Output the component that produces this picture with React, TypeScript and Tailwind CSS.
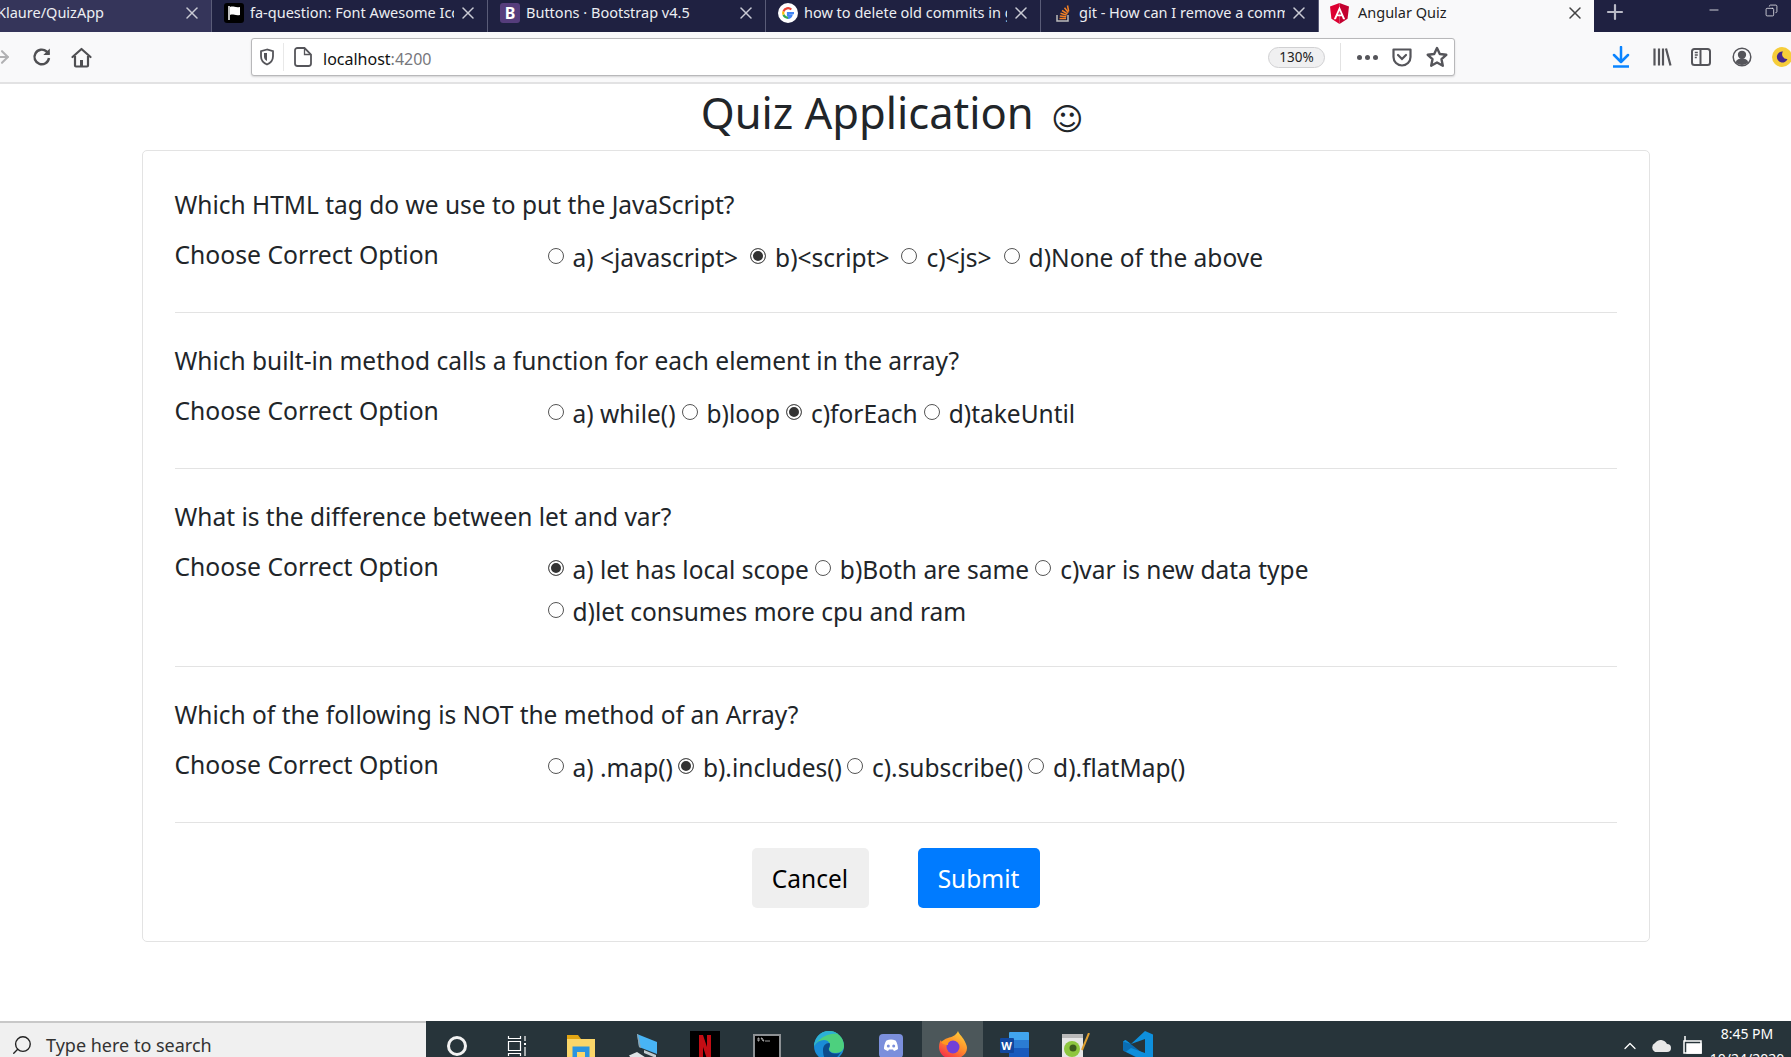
import { ArrowRight, ChevronUp, Copy, Minus, Plus, Search, X } from 'lucide-react'

const tabs = [
  { title: 'Klaure/QuizApp', width: 'w-[212px]', bg: 'bg-[#35355a]', icon: null },
  { title: 'fa-question: Font Awesome Icons', width: 'w-[276px]', bg: 'bg-[#1f2141]', icon: 'flag' },
  { title: 'Buttons · Bootstrap v4.5', width: 'w-[278px]', bg: 'bg-[#1f2141]', icon: 'bootstrap' },
  { title: 'how to delete old commits in git', width: 'w-[275px]', bg: 'bg-[#1f2141]', icon: 'google' },
  { title: 'git - How can I remove a commit', width: 'w-[278px]', bg: 'bg-[#1f2141]', icon: 'stack' },
]

const questions = [
  {
    text: 'Which HTML tag do we use to put the JavaScript?',
    options: ['a) <javascript>', 'b)<script>', 'c)<js>', 'd)None of the above'],
    picked: 1,
    gap: 'gap-x-[12px]',
  },
  {
    text: 'Which built-in method calls a function for each element in the array?',
    options: ['a) while()', 'b)loop', 'c)forEach', 'd)takeUntil'],
    picked: 2,
    gap: 'gap-x-[6px]',
  },
  {
    text: 'What is the difference between let and var?',
    options: ['a) let has local scope', 'b)Both are same', 'c)var is new data type', 'd)let consumes more cpu and ram'],
    picked: 0,
    gap: 'gap-x-[6px]',
  },
  {
    text: 'Which of the following is NOT the method of an Array?',
    options: ['a) .map()', 'b).includes()', 'c).subscribe()', 'd).flatMap()'],
    picked: 1,
    gap: 'gap-x-[5px]',
  },
]

function TabIcon({ kind }: { kind: string | null }) {
  if (kind === 'flag') {
    return (
      <svg viewBox="0 0 20 20" className="w-5 h-5 shrink-0">
        <rect width="20" height="20" rx="3" fill="#000" />
        <path d="M5 3v14" stroke="#fff" strokeWidth="1.5" />
        <path d="M6 4c3-1.500 5 1 10 0v8c-5 1-7-1.500-10 0z" fill="#fff" />
      </svg>
    )
  }
  if (kind === 'bootstrap') {
    return (
      <div className="w-5 h-5 shrink-0 rounded-[3px] bg-[#563d7c] text-white text-[16px] font-bold leading-5 text-center">B</div>
    )
  }
  if (kind === 'google') {
    return (
      <svg viewBox="0 0 20 20" className="w-5 h-5 shrink-0">
        <circle cx="10" cy="10" r="10" fill="#fff" />
        <path d="M16 10.200h-6v2.300h3.400c-.4 1.500-1.700 2.300-3.400 2.300" fill="none" stroke="#4285f4" strokeWidth="2.200" />
        <path d="M10 14.800a4.800 4.800 0 0 1-4.500-3.100" fill="none" stroke="#34a853" strokeWidth="2.200" />
        <path d="M5.500 11.700a4.800 4.800 0 0 1 0-3.400" fill="none" stroke="#fbbc05" strokeWidth="2.200" />
        <path d="M5.500 8.300A4.800 4.800 0 0 1 13.300 6.500" fill="none" stroke="#ea4335" strokeWidth="2.200" />
      </svg>
    )
  }
  if (kind === 'stack') {
    return (
      <svg viewBox="0 0 20 20" className="w-5 h-5 shrink-0" fill="none">
        <path d="M4 12v6h11v-6" stroke="#bcbbbb" strokeWidth="1.500" />
        <path d="M6.500 15.500h6.500M6.800 13l6.400.8M7.500 10.300l6.200 1.800M9 7.500l5.500 3.300M11.500 4.800l3.800 4.800M14.500 2.500l1.200 6" stroke="#f48024" strokeWidth="1.500" />
      </svg>
    )
  }
  return null
}

function Tab({ title, width, bg, icon }: { title: string; width: string; bg: string; icon: string | null }) {
  return (
    <div className={`${width} ${bg} h-8 shrink-0 flex items-center border-r border-[#5a5c78] pb-[6px] ${icon ? 'pl-[12px]' : ''} pr-[9px]`}>
      <TabIcon kind={icon} />
      <span className={`flex-1 min-w-0 overflow-hidden whitespace-nowrap text-[14.500px] text-[#eceef2] ${icon ? 'ml-[6px]' : '-ml-[3px]'}`}>{title}</span>
      <X className="w-[20px] h-[20px] text-[#c9cad4] ml-[4px] shrink-0" strokeWidth={1.800} />
    </div>
  )
}

function TabStrip() {
  return (
    <div className="h-8 bg-[#1f2141] flex items-start shrink-0">
      {tabs.map(t => (
        <Tab key={t.title} title={t.title} width={t.width} bg={t.bg} icon={t.icon} />
      ))}
      <div className="w-[275px] h-8 shrink-0 bg-[#f9f9fa] flex items-center pl-[11px] pr-[9px] pb-[6px]">
        <svg viewBox="0 0 20 22" className="w-[19px] h-[21px] shrink-0">
          <path d="M10 0 0 3.500l1.500 13L10 22z" fill="#dd0031" />
          <path d="M10 0v22l8.500-5.500 1.500-13z" fill="#c3002f" />
          <path d="M10 3.500 4 17h2.300l1.200-3h5l1.200 3H16zM8.400 12 10 8l1.600 4z" fill="#fff" />
        </svg>
        <span className="flex-1 ml-[9px] text-[14.500px] text-[#1e1e24] whitespace-nowrap">Angular Quiz</span>
        <X className="w-[20px] h-[20px] text-[#444] shrink-0" strokeWidth={1.800} />
      </div>
      <Plus className="w-[24px] h-[24px] text-[#b9bac6] ml-[9px] shrink-0" strokeWidth={2.200} />
      <div className="flex-1" />
      <Minus className="w-[14px] h-[14px] text-[#e6e6ea] mt-[3px] mr-[44px]" strokeWidth={1.500} />
      <Copy className="w-[13px] h-[13px] text-[#e6e6ea] mt-[4px] mr-[13px] -scale-x-100" strokeWidth={1.500} />
    </div>
  )
}

function Toolbar() {
  return (
    <div className="h-[52px] shrink-0 bg-[#f9f9fa] border-b-2 border-[#e2e2e3] flex items-center overflow-hidden">
      <ArrowRight className="w-[20px] h-[20px] text-[#b1b1b3] -ml-[8px] shrink-0" strokeWidth={2.500} />
      <svg viewBox="0 0 20 20" className="w-[20px] h-[20px] ml-[20px] shrink-0" fill="none" stroke="#4f4f52" strokeWidth="2.400">
        <path d="M17 11a7.300 7.300 0 1 1-2.400-6.500L17 7" />
        <path d="M17.800 1.500V8h-6.500" fill="#4f4f52" strokeWidth="0" />
      </svg>
      <svg viewBox="0 0 21 21" className="w-[21px] h-[21px] ml-[19px] shrink-0" fill="none" stroke="#4f4f52" strokeWidth="2.200">
        <path d="M1.500 10 10.500 2l9 8" strokeLinecap="round" strokeLinejoin="round" />
        <path d="M4 9v9.500a1 1 0 0 0 1 1h11a1 1 0 0 0 1-1V9" />
        <rect x="9" y="13" width="3" height="6" fill="#4f4f52" strokeWidth="0" />
      </svg>
      <div className="w-[1204px] h-[38px] ml-[159px] shrink-0 bg-white border border-[#b8b8ba] rounded-[3px] shadow-[0_1px_2px_rgba(0,0,0,0.15)] flex items-center pr-[6px]">
        <svg viewBox="0 0 16 18" className="w-[16px] h-[18px] ml-[7px] shrink-0">
          <path d="M8 1.500 2 3.200v5c0 4 2.500 6.700 6 8.300 3.500-1.600 6-4.300 6-8.300v-5z" fill="none" stroke="#55555a" strokeWidth="1.800" />
          <path d="M8 5H5v3.500c0 2 1.200 3.500 3 4.500z" fill="#55555a" />
        </svg>
        <div className="w-px h-[28px] bg-[#e8e8e8] ml-[8px]" />
        <svg viewBox="0 0 18 20" className="w-[18px] h-[20px] ml-[10px] shrink-0" fill="none" stroke="#55555a" strokeWidth="1.800">
          <path d="M3.500 1h7l6.500 6.500v9a2.500 2.500 0 0 1-2.500 2.500h-11A2.500 2.500 0 0 1 1 16.500v-13A2.500 2.500 0 0 1 3.500 1z" />
          <path d="M10.500 1v6.500H17" strokeWidth="1.300" />
        </svg>
        <span className="ml-[11px] mt-[3px] text-[16px] text-[#111]">localhost<span className="text-[#77777c]">:4200</span></span>
        <div className="flex-1" />
        <div className="w-[57px] h-[21px] rounded-full bg-[#f0f0f1] border border-[#d0d0d2] text-[13.500px] text-[#222] flex items-center justify-center">130%</div>
        <div className="w-px h-[28px] bg-[#e2e2e2] ml-[15px]" />
        <div className="flex gap-[3px] ml-[16px] shrink-0">
          <div className="w-[5px] h-[5px] rounded-full bg-[#55555a]" />
          <div className="w-[5px] h-[5px] rounded-full bg-[#55555a]" />
          <div className="w-[5px] h-[5px] rounded-full bg-[#55555a]" />
        </div>
        <svg viewBox="0 0 20 20" className="w-[20px] h-[20px] ml-[14px] shrink-0" fill="none" stroke="#55555a" strokeWidth="2.200">
          <path d="M1.500 2.500h17v7.500a8.500 8.500 0 0 1-17 0z" strokeLinejoin="round" />
          <path d="m6 8 4 4 4-4" strokeLinecap="round" />
        </svg>
        <svg viewBox="0 0 22 22" className="w-[22px] h-[22px] ml-[14px] shrink-0" fill="none" stroke="#55555a" strokeWidth="2.400" strokeLinejoin="round">
          <path d="m11 2 2.800 6 6.500.8-4.800 4.400 1.300 6.500L11 16.500l-5.800 3.200 1.300-6.500-4.800-4.400 6.500-.8z" />
        </svg>
      </div>
      <svg viewBox="0 0 20 22" className="w-[20px] h-[22px] ml-[156px] shrink-0" fill="none" stroke="#0a84ff" strokeWidth="2.500">
        <path d="M10 1v14M3 9l7 7 7-7" strokeLinecap="round" strokeLinejoin="round" />
        <path d="M2 20.500h16" />
      </svg>
      <svg viewBox="0 0 20 20" className="w-[20px] h-[20px] ml-[21px] shrink-0" fill="none" stroke="#55555a" strokeWidth="2.200">
        <path d="M2.500 1.500v17M7 1.500v17M11 1.500v17M14 1.500l4.500 17" />
      </svg>
      <svg viewBox="0 0 20 20" className="w-[20px] h-[20px] ml-[19px] shrink-0" fill="none" stroke="#55555a" strokeWidth="2">
        <rect x="1" y="2" width="18" height="16" rx="2.500" />
        <path d="M9.500 2.500v15" />
        <path d="M3.800 5.500h3M3.800 8h3M3.800 10.500h2" strokeWidth="1.300" />
      </svg>
      <svg viewBox="0 0 20 20" className="w-[20px] h-[20px] ml-[21px] shrink-0" fill="none" stroke="#55555a" strokeWidth="1.500">
        <circle cx="10" cy="10" r="8.800" />
        <circle cx="10" cy="7.800" r="3.400" fill="#55555a" />
        <path d="M3.800 15.500c.5-3 3-4 6.200-4s5.700 1 6.200 4c-3 3.200-9.400 3.200-12.400 0z" fill="#55555a" stroke="none" />
      </svg>
      <div className="w-[20px] h-[20px] ml-[20px] shrink-0 rounded-full bg-[#f6cd3a] flex items-center justify-center">
        <svg viewBox="0 0 12 12" className="w-[12px] h-[12px]">
          <path d="M7 .5A5.500 5.500 0 1 0 11.500 8 4.800 4.800 0 0 1 7 .5z" fill="#45278d" />
        </svg>
      </div>
    </div>
  )
}

function Question({ text, options, picked, index, gap }: { text: string; options: string[]; picked: number; index: number; gap: string }) {
  return (
    <div className={index === 0 ? '' : 'pt-[30px]'}>
      <h5 className="text-[24.500px] leading-[36px] text-[#212529]">{text}</h5>
      <div className="flex mt-[14px]">
        <label className="w-[373px] shrink-0 text-[24.700px] leading-[36px] text-[#212529]">Choose Correct Option</label>
        <div className={`w-[800px] flex flex-wrap ${gap}`}>
          {options.map((opt, i) => (
            <label key={opt} className="flex items-center h-[42px] gap-[9px] text-[24.500px] text-[#212529]">
              <input
                type="radio"
                name={`q${index}`}
                defaultChecked={i === picked}
                className="appearance-none w-[16px] h-[16px] -mt-[4px] rounded-full border border-[#555] bg-white checked:bg-[#333] checked:shadow-[inset_0_0_0_2px_#fff]"
              />
              {opt}
            </label>
          ))}
        </div>
      </div>
      <hr className="mt-[33px] border-t border-[#e3e3e3]" />
    </div>
  )
}

function Taskbar() {
  return (
    <div className="h-[36px] shrink-0 flex overflow-hidden">
      <div className="w-[426px] shrink-0 h-[48px] bg-[#f0f0f0] border-t-2 border-[#c8c8c8] flex items-start pt-[11px] pl-[11px]">
        <Search className="w-[22px] h-[22px] text-[#222] -scale-x-100" strokeWidth={1.500} />
        <span className="ml-[13px] text-[18px] leading-[22px] text-[#333]">Type here to search</span>
      </div>
      <div className="flex-1 bg-[#27343a] flex items-start">
        {/* cortana */}
        <div className="w-[62px] shrink-0 flex justify-center pt-[15px]">
          <div className="w-[20px] h-[20px] rounded-full border-[3px] border-[#f2f2f2]" />
        </div>
        {/* task view */}
        <div className="w-[62px] shrink-0 flex justify-center pt-[15px] pr-[4px]">
          <svg viewBox="0 0 20 20" className="w-[20px] h-[20px]" fill="none" stroke="#fff" strokeWidth="1.200">
            <path d="M1.500 0v2.500h12V0M1.500 5.500h12v9h-12zM1.500 20v-2.500h12V20M18 0v5" />
            <rect x="17" y="7" width="2" height="2" fill="#fff" stroke="none" />
            <path d="M18 11v9" />
          </svg>
        </div>
        {/* file explorer */}
        <div className="w-[62px] shrink-0 flex justify-center pt-[13px]">
          <svg viewBox="0 0 28 28" className="w-[28px] h-[28px]">
            <path d="M0 5h28v23H0z" fill="#fbd669" />
            <path d="M0 1h11l3 4H0z" fill="#e2a512" />
            <path d="M5.500 12.500h17V28h-4.500v-10h-8v10H5.500z" fill="#2a94e0" />
          </svg>
        </div>
        {/* this pc */}
        <div className="w-[62px] shrink-0 flex justify-center pt-[13px]">
          <svg viewBox="0 0 28 28" className="w-[28px] h-[28px]">
            <path d="m8 0 20 8v12L10 13z" fill="#48b4f5" />
            <path d="m8 0 2 13 2 1L9 0z" fill="#8fa3ad" />
            <path d="m15 16 12 5v3l-12-5z" fill="#c2ccd0" />
            <path d="M0 21.500 8 18l11 7-5 3H5z" fill="#dfe4e6" />
          </svg>
        </div>
        {/* netflix */}
        <div className="w-[62px] shrink-0 flex justify-center pt-[10px]">
          <div className="w-[30px] h-[30px] bg-black flex justify-center pt-[4px]">
            <svg viewBox="0 0 12 24" className="w-[12px] h-[24px]">
              <path d="M0 0h4l4 12V0h4v24H8L4 12v12H0z" fill="#c30d14" />
            </svg>
          </div>
        </div>
        {/* terminal */}
        <div className="w-[62px] shrink-0 flex justify-center pt-[13px]">
          <div className="w-[28px] h-[28px] bg-black border-2 border-[#8d9194] flex items-start">
            <svg viewBox="0 0 24 8" className="w-[24px] h-[8px]">
              <path d="M3 2h1v3H3zM6 2h1l2 3H8zM10 5h5" stroke="#c9c9c9" strokeWidth="0.800" />
            </svg>
          </div>
        </div>
        {/* edge */}
        <div className="w-[62px] shrink-0 flex justify-center pt-[10px]">
          <svg viewBox="0 0 30 30" className="w-[30px] h-[30px]">
            <circle cx="15" cy="15" r="15" fill="#1a8cd8" />
            <path d="M15 0a15 15 0 0 1 15 15c0 4-3 7-8 7-4 0-7-1.500-7-4 0-1 .8-1.500 1-3 .3-3-2-6-6-6-4 0-7.500 2-10 6C2 5 8 0 15 0z" fill="#4dd07e" />
            <path d="M15 0a15 15 0 0 1 9 3c-5-1-16 0-24 12C1 5 8 0 15 0z" fill="#2cb0d6" />
            <path d="M9 19c0-4 2.500-7 6-7 1.500 0 1 3 0 5-1 3 2 5.500 7 5.500 2 0 3.500-.5 5-1.500-2 3-6 9-12 9-4 0-6-5-6-11z" fill="#0b4c8c" />
          </svg>
        </div>
        {/* discord */}
        <div className="w-[62px] shrink-0 flex justify-center pt-[13px]">
          <svg viewBox="0 0 24 24" className="w-[24px] h-[24px]">
            <rect width="24" height="24" rx="4" fill="#7b8fdc" />
            <path d="M5 15c0-4 1.500-7.500 2.500-8.500 3-1.200 6-1.200 9 0C17.500 7.500 19 11 19 15c-1.500 1.200-3 1.800-4 2l-1-1.500h-4L9 17c-1-.2-2.500-.8-4-2z" fill="#fff" />
            <circle cx="9.300" cy="12" r="1.500" fill="#7b8fdc" />
            <circle cx="14.700" cy="12" r="1.500" fill="#7b8fdc" />
          </svg>
        </div>
        {/* firefox, the running one */}
        <div className="w-[61px] shrink-0 bg-[#4c575a] h-[36px] flex justify-center pt-[10px]">
          <svg viewBox="0 0 28 28" className="w-[28px] h-[28px]">
            <defs>
              <linearGradient id="fx" x1="0.800" y1="0" x2="0.200" y2="1">
                <stop offset="0" stopColor="#ffd23a" />
                <stop offset="0.500" stopColor="#ff8a2a" />
                <stop offset="1" stopColor="#f5264e" />
              </linearGradient>
            </defs>
            <path d="M19 0c1 3 3 4 5.500 8 2 3.500 3.500 6.500 3.500 9 0 6-6 11-14 11S0 23 0 16c0-3 1-6 2-7 0 1 .5 2 1.500 2.500C5 8 7 7.500 9 7c3-1 8-2 10-7z" fill="url(#fx)" />
            <circle cx="14" cy="16" r="6.500" fill="#7240d8" />
            <path d="M2 11c3-3 9-4 12-2-3 0-5 2-5 5-3 0-6-1-7-3z" fill="#ff9a1f" />
          </svg>
        </div>
        {/* word */}
        <div className="w-[62px] shrink-0 flex justify-center pt-[11px]">
          <div className="w-[29px] h-[30px] flex flex-col items-end relative">
            <div className="w-[20px] h-[8px] bg-[#41a5ee] rounded-t-[1px]" />
            <div className="w-[20px] h-[8px] bg-[#2b7cd3]" />
            <div className="w-[20px] h-[14px] bg-[#185abd]" />
            <div className="absolute left-0 top-[6px] w-[14px] h-[15px] bg-[#11479e] rounded-[1px] text-white text-[11px] font-bold leading-[15px] text-center">W</div>
          </div>
        </div>
        {/* notepad++ */}
        <div className="w-[62px] shrink-0 flex justify-center pt-[12px]">
          <svg viewBox="0 0 28 28" className="w-[28px] h-[28px]">
            <rect x="0" y="1" width="21" height="27" fill="#e6e6e6" />
            <path d="M0 1h21v4H0z" fill="#b9b9b9" />
            <circle cx="10" cy="16" r="8" fill="#8ec63f" />
            <circle cx="11" cy="15" r="3.500" fill="#3c5a1e" />
            <path d="m27 0-7 17" stroke="#e0a030" strokeWidth="2" />
          </svg>
        </div>
        {/* vs code */}
        <div className="w-[62px] shrink-0 flex justify-center pt-[10px]">
          <svg viewBox="0 0 30 30" className="w-[30px] h-[30px]">
            <path d="M0 10.500 2.500 9 22 24l-2 6L0 19.500z" fill="#0a6db3" />
            <path d="M22 0 30 3.500V26.500L22 30 0 19.500l2.500 1.500L8 17l14 5V8L8 13 0 10.500 2.500 9 8 13z" fill="#0e8fdc" />
          </svg>
        </div>
        <div className="flex-1" />
        <div className="flex items-start pt-[17px]">
          <ChevronUp className="w-[20px] h-[20px] text-white -mt-[2px]" strokeWidth={1.500} />
          <svg viewBox="0 0 22 14" className="w-[22px] h-[14px] ml-[10px]">
            <path d="M5 14a5 5 0 0 1 0-9 7 7 0 0 1 12 1 4 4 0 0 1 0 8z" fill="#e8e8e8" />
          </svg>
          <svg viewBox="0 0 22 18" className="w-[22px] h-[18px] ml-[9px] -mt-[2px]" fill="none" stroke="#fff" strokeWidth="1.500">
            <rect x="3" y="5" width="17" height="12" />
            <rect x="6" y="8" width="14" height="9" fill="#fff" />
            <path d="M4 0v5" />
          </svg>
          <div className="w-[88px] -mt-[17px] text-center text-white text-[14px] leading-[25px]">
            <div>8:45 PM</div>
            <div>10/24/2020</div>
          </div>
        </div>
      </div>
    </div>
  )
}

export default function App() {
  return (
    <div className="h-[1057px] w-[1791px] overflow-hidden flex flex-col bg-white font-['Noto_Sans',sans-serif]">
      <TabStrip />
      <Toolbar />
      <main className="flex-1 min-h-0">
        <h1 className="text-center text-[43.500px] leading-[60px] text-[#212529] mt-[-2px]">
          Quiz Application <span className="ml-[6px] mr-[7px] text-[31px] relative top-[1px] font-['DejaVu_Sans',sans-serif]">☺</span>
        </h1>
        <div className="w-[1508px] mx-auto mt-[2px] border border-[#e3e3e3] rounded-[5px] px-[32px] pt-[36px] pb-[33px]">
          {questions.map((q, i) => (
            <Question key={q.text} index={i} text={q.text} options={q.options} picked={q.picked} gap={q.gap} />
          ))}
          <div className="flex justify-center gap-[49px] mt-[25px]">
            <button className="w-[117px] h-[60px] pt-[3px] rounded-[5px] bg-[#efefef] text-[24.500px] text-black">Cancel</button>
            <button className="w-[122px] h-[60px] pt-[3px] rounded-[5px] bg-[#007bff] text-[24.500px] text-white">Submit</button>
          </div>
        </div>
      </main>
      <Taskbar />
    </div>
  )
}
